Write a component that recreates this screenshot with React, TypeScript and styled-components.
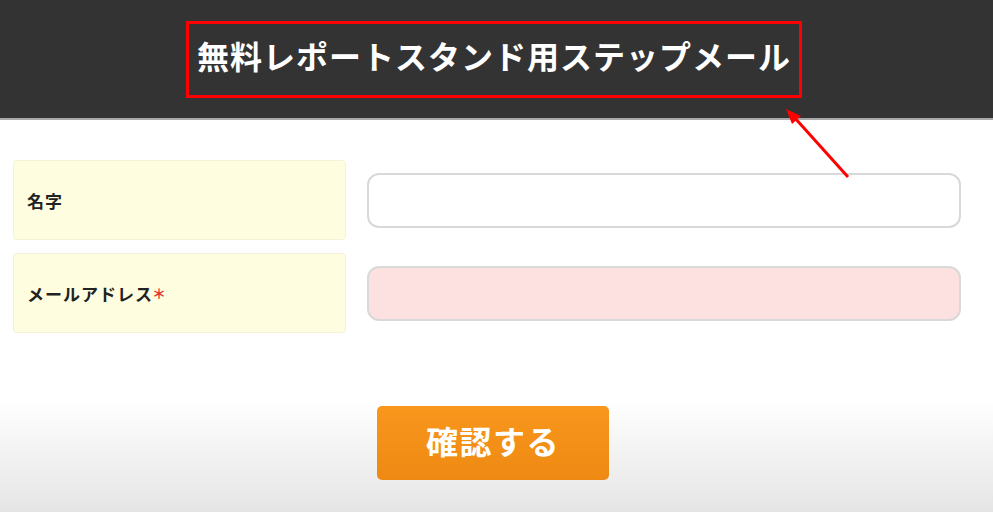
import styled, { createGlobalStyle } from "styled-components";

const GlobalStyle = createGlobalStyle`
  html, body {
    margin: 0;
    padding: 0;
  }
  body {
    width: 993px;
    height: 512px;
    overflow: hidden;
    font-family: "Noto Sans CJK JP", "Noto Sans", sans-serif;
    background: linear-gradient(to bottom, #ffffff 0px, #ffffff 400px, #e5e5e5 512px);
  }
`;

const Page = styled.div`
  position: relative;
  width: 993px;
  height: 512px;
`;

const Header = styled.header`
  height: 118px;
  background: #333333;
  border-bottom: 2px solid #a9a9a9;
  box-sizing: content-box;
  display: flex;
  align-items: flex-start;
`;

const TitleBox = styled.div`
  margin: 21px 0 0 186px;
  width: 616px;
  height: 77px;
  box-sizing: border-box;
  border: 3px solid #ff0000;
  display: flex;
  align-items: center;
  justify-content: center;
`;

const Title = styled.h1`
  margin: 0 0 10px 0;
  color: #ffffff;
  font-size: 32px;
  font-weight: 700;
  letter-spacing: 1px;
  white-space: nowrap;
`;

const Form = styled.div`
  display: flex;
  flex-direction: column;
  gap: 13px;
  padding: 40px 0 0 13px;
`;

const Row = styled.div`
  display: flex;
  align-items: center;
  gap: 21px;
`;

const Label = styled.div`
  width: 333px;
  height: 80px;
  box-sizing: border-box;
  background: #fffde0;
  border: 1px solid #f4f1d8;
  border-radius: 4px;
  display: flex;
  align-items: center;
  padding-left: 13px;
  color: #222222;
  font-size: 17px;
  font-weight: 700;
  letter-spacing: 1px;
`;

const Required = styled.span`
  color: #e5322d;
  margin-left: -1px;
  font-size: 14px;
`;

const Input = styled.div<{ $error?: boolean }>`
  width: 594px;
  height: 55px;
  box-sizing: border-box;
  border: 2px solid #d9d9d9;
  border-radius: 12px;
  background: ${(p) => (p.$error ? "#fde0e0" : "#ffffff")};
  margin-top: ${(p) => (p.$error ? "1px" : "0")};
`;

const Actions = styled.div`
  display: flex;
  padding: 73px 0 0 377px;
`;

const Button = styled.button`
  width: 232px;
  height: 74px;
  border: none;
  border-radius: 5px;
  background: linear-gradient(to bottom, #f9961c, #ee8a13);
  color: #ffffff;
  font-family: "Noto Sans CJK JP", sans-serif;
  font-size: 32px;
  font-weight: 700;
  letter-spacing: 1.5px;
  padding: 0 0 6px 0;
  cursor: pointer;
`;

const Arrow = styled.svg`
  position: absolute;
  left: 770px;
  top: 100px;
  overflow: visible;
`;

export default function App() {
  return (
    <Page>
      <GlobalStyle />
      <Header>
        <TitleBox>
          <Title>無料レポートスタンド用ステップメール</Title>
        </TitleBox>
      </Header>
      <Form>
        <Row>
          <Label>名字</Label>
          <Input />
        </Row>
        <Row>
          <Label>
            メールアドレス<Required>＊</Required>
          </Label>
          <Input $error />
        </Row>
      </Form>
      <Actions>
        <Button>確認する</Button>
      </Actions>
      <Arrow width="90" height="90" viewBox="0 0 90 90">
        <line x1="78" y1="77" x2="24" y2="17" stroke="#ff0000" strokeWidth="3" />
        <polygon points="16,9 31,16 22,24" fill="#ff0000" />
      </Arrow>
    </Page>
  );
}
